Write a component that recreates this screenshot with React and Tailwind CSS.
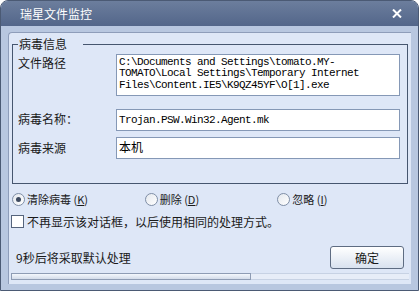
const cjk = "font-['Noto_Sans_CJK_SC',sans-serif]";
const mono = "font-['Liberation_Mono','Noto_Sans_CJK_SC',monospace]";

const Radio = ({ checked, label, hot }) => (
  <div className="w-[134px] flex items-center gap-[2px]">
    <span className="w-[13px] h-[13px] rounded-full border border-[#7f8ea6] bg-gradient-to-br from-[#e4e8ee] to-white flex items-center justify-center">
      {checked && <span className="w-[5px] h-[5px] rounded-full bg-[#3d4a60]" />}
    </span>
    <span className="text-[11px] leading-[13px] text-[#1a1a1a]">
      {label} (<u>{hot}</u>)
    </span>
  </div>
);

export default function App() {
  return (
    <div className={`w-[419px] h-[291px] flex flex-col bg-[#b8c7e0] border border-[#4b5a74] rounded-t-[8px] overflow-hidden ${cjk}`}>
      {/* 标题栏 */}
      <div className="h-[25px] shrink-0 flex items-center justify-between pl-[19px] pr-[16px] bg-gradient-to-b from-[#6c7e9d] to-[#53668a] text-white">
        <span className="text-[12px] leading-[14px]">瑞星文件监控</span>
        <svg width="10" height="9" viewBox="0 0 10 9">
          <path d="M1 0.5 L9 8.5 M9 0.5 L1 8.5" stroke="#fff" strokeWidth="2" />
        </svg>
      </div>

      {/* 窗口主体 */}
      <div className="flex-1 flex flex-col px-[7px] pb-[7px] pt-[6px]">
        <div className="flex-1 flex flex-col bg-[#dee7f7] border-t border-l border-[#8e9dba] rounded-tl-[4px] pt-[5px] px-[1px] pb-[4px]">
          <fieldset className="mx-[2px] border border-[#46566f] pl-[5px] pr-[7px] pb-[24px]">
            <legend className="pl-[1px] pr-[16px] text-[12px] leading-[12px] text-[#1a1a1a]">病毒信息</legend>

            <div className="flex mt-[4px]">
              <div className="w-[98px] text-[12px] leading-[17px] text-[#1a1a1a]">文件路径</div>
              <div className={`flex-1 h-[42px] border border-[#8598b6] bg-white pl-[2px] pt-[2px] text-[11px] leading-[11.3px] tracking-[-0.6px] text-black ${mono}`}>
                C:\Documents and Settings\tomato.MY-<br />
                TOMATO\Local Settings\Temporary Internet<br />
                Files\Content.IE5\K9QZ45YF\O[1].exe
              </div>
            </div>

            <div className="flex items-center mt-[13px]">
              <div className="w-[98px] text-[12px] leading-[17px] text-[#1a1a1a] -mt-[3px]">病毒名称：</div>
              <div className={`flex-1 h-[22px] border border-[#8598b6] bg-white pl-[2px] flex items-center text-[11px] tracking-[-0.6px] text-black ${mono}`}>
                Trojan.PSW.Win32.Agent.mk
              </div>
            </div>

            <div className="flex items-center mt-[6px]">
              <div className="w-[98px] text-[12px] leading-[17px] text-[#1a1a1a] -mt-[1px]">病毒来源</div>
              <div className="flex-1 h-[22px] border border-[#8598b6] bg-white pl-[2px] flex items-center text-[12px] text-black">
                <span className="-mt-[2px]">本机</span>
              </div>
            </div>
          </fieldset>

          {/* 处理方式 */}
          <div className="flex mt-[9px] pl-[2px]">
            <Radio checked label="清除病毒" hot="K" />
            <Radio label="删除" hot="D" />
            <Radio label="忽略" hot="I" />
          </div>

          <div className="flex items-center mt-[9px] pl-[1px] gap-[3px]">
            <span className="w-[13px] h-[13px] border border-[#55647c] bg-white" />
            <span className="text-[12px] leading-[13px] text-[#1a1a1a]">不再显示该对话框，以后使用相同的处理方式。</span>
          </div>

          <div className="flex items-center justify-between mt-[18px] pl-[6px] pr-[6px]">
            <span className="text-[12px] leading-[14px] text-[#1a1a1a]">9秒后将采取默认处理</span>
            <button className="w-[74px] h-[23px] rounded-[3px] border border-[#5e6c82] bg-gradient-to-b from-white to-[#d9e2ef] text-[12px] text-[#1a1a1a]">
              确定
            </button>
          </div>

          <div className="flex mt-[4px] mx-[1px] h-[7px]">
            <div className="w-[240px] border border-[#8e9cb4] bg-gradient-to-b from-[#f4f7fc] to-[#d3dcea]" />
            <div className="flex-1 border-y border-[#c7d2e4] bg-[#e7edf8]" />
          </div>
        </div>
      </div>
    </div>
  );
}
